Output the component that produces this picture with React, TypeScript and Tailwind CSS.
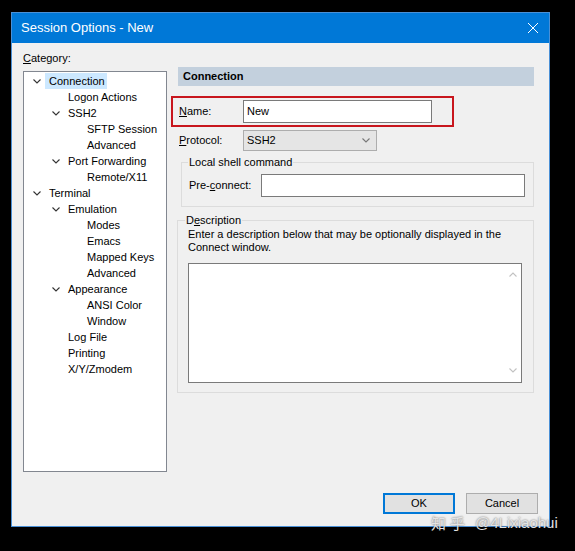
import React from "react";

const FONT = { fontFamily: '"Liberation Sans", Arial, sans-serif' };

type Item = { label: string; level: number; expanded?: boolean; selected?: boolean };

const items: Item[] = [
  { label: "Connection", level: 0, expanded: true, selected: true },
  { label: "Logon Actions", level: 1 },
  { label: "SSH2", level: 1, expanded: true },
  { label: "SFTP Session", level: 2 },
  { label: "Advanced", level: 2 },
  { label: "Port Forwarding", level: 1, expanded: true },
  { label: "Remote/X11", level: 2 },
  { label: "Terminal", level: 0, expanded: true },
  { label: "Emulation", level: 1, expanded: true },
  { label: "Modes", level: 2 },
  { label: "Emacs", level: 2 },
  { label: "Mapped Keys", level: 2 },
  { label: "Advanced", level: 2 },
  { label: "Appearance", level: 1, expanded: true },
  { label: "ANSI Color", level: 2 },
  { label: "Window", level: 2 },
  { label: "Log File", level: 1 },
  { label: "Printing", level: 1 },
  { label: "X/Y/Zmodem", level: 1 },
];

const Chevron = ({ color = "#333", w = 8, h = 5 }: { color?: string; w?: number; h?: number }) => (
  <svg width={w} height={h} viewBox="0 0 8 5">
    <path d="M0.5 0.5 L4 4 L7.5 0.5" fill="none" stroke={color} strokeWidth="1.1" />
  </svg>
);

const ChevronUp = ({ color = "#c2c2c2" }: { color?: string }) => (
  <svg width={8} height={5} viewBox="0 0 8 5">
    <path d="M0.5 4.5 L4 1 L7.5 4.5" fill="none" stroke={color} strokeWidth="1.1" />
  </svg>
);

const indents = ["ml-[5px]", "ml-[24px]", "ml-[43px]"];

export default function App() {
  return (
    <div className="relative w-[575px] h-[551px] bg-black pt-[12px] pl-[11px] text-[11px] leading-[13px] text-black" style={FONT}>
      <div className="w-[539px] h-[515px] border border-[#4a90d6] bg-[#f0f0f0] flex flex-col">
        {/* Title bar */}
        <div className="h-[30px] bg-[#0078d7] flex items-center justify-between pl-[9px] pr-[10px] text-white text-[13px] leading-[16px]">
          <span>Session Options - New</span>
          <svg width="12" height="12" viewBox="0 0 12 12">
            <path d="M1 1 L11 11 M11 1 L1 11" stroke="white" strokeWidth="1" />
          </svg>
        </div>

        <div className="flex">
          {/* Left column */}
          <div className="pl-[11px] pt-[9px] flex flex-col">
            <div className="h-[13px]">
              <span className="underline">C</span>ategory:
            </div>
            <div className="mt-[6px] w-[144px] h-[401px] border border-[#828790] bg-white pt-[1px] flex flex-col">
              {items.map((it, i) => (
                <div key={i} className={`h-[16px] flex items-center ${indents[it.level]}`}>
                  <div className="w-[16px] h-[16px] flex items-center justify-center">
                    {it.expanded ? <Chevron /> : null}
                  </div>
                  <div className={`h-[16px] flex items-center pl-[4px] pr-[2px] ${it.selected ? "bg-[#cce8ff]" : ""}`}>
                    {it.label}
                  </div>
                </div>
              ))}
            </div>
          </div>

          {/* Right column */}
          <div className="ml-[4px] pt-[24px] flex flex-col w-[363px]">
            <div className="ml-[7px] w-[356px] h-[19px] bg-[#c3d0dd] flex items-center pl-[5px] font-bold">
              Connection
            </div>

            <div className="mt-[10px] w-[283px] h-[31px] border-2 border-[#c8161d] flex items-center pl-[6px]">
              <div className="w-[64px]">
                <span className="underline">N</span>ame:
              </div>
              <div className="w-[189px] h-[23px] border border-[#7a7a7a] bg-white flex items-center pl-[3px]">New</div>
            </div>

            <div className="mt-[3px] h-[21px] flex items-center pl-[8px]">
              <div className="w-[64px]">
                <span className="underline">P</span>rotocol:
              </div>
              <div className="w-[134px] h-[21px] border border-[#adadad] bg-[#e5e5e5] flex items-center justify-between pl-[3px] pr-[6px]">
                <span>SSH2</span>
                <Chevron color="#777" />
              </div>
            </div>

            <fieldset className="mt-[5px] ml-[10px] w-[353px] border border-[#dcdcdc] p-0">
              <legend className="ml-[6px] px-[1px] leading-[13px]">Local shell command</legend>
              <div className="mt-[5px] flex items-center pl-[7px] pb-[9px]">
                <div className="w-[72px]">
                  Pre-<span className="underline">c</span>onnect:
                </div>
                <div className="w-[264px] h-[23px] border border-[#7a7a7a] bg-white" />
              </div>
            </fieldset>

            <fieldset className="mt-[7px] ml-[6px] w-[357px] border border-[#dcdcdc] p-0">
              <legend className="ml-[7px] px-[1px] leading-[13px]">
                D<span className="underline">e</span>scription
              </legend>
              <div className="pl-[10px] pb-[9px]">
                <div className="mt-[1px] leading-[13px]">
                  Enter a description below that may be optionally displayed in the
                  <br />
                  Connect window.
                </div>
                <div className="mt-[9px] w-[334px] h-[120px] border border-[#7a7a7a] bg-white flex justify-end">
                  <div className="w-[17px] flex flex-col items-center justify-between pt-[8px] pb-[9px]">
                    <ChevronUp />
                    <Chevron color="#c2c2c2" />
                  </div>
                </div>
              </div>
            </fieldset>
          </div>
        </div>

        {/* Buttons */}
        <div className="mt-[21px] flex justify-end gap-[11px] pr-[11px]">
          <button className="w-[72px] h-[21px] border-2 border-[#0078d7] bg-[#e1e1e1] flex items-center justify-center">
            OK
          </button>
          <button className="w-[72px] h-[21px] border border-[#adadad] bg-[#e1e1e1] flex items-center justify-center">
            Cancel
          </button>
        </div>
      </div>

      {/* Watermark */}
      <div
        className="absolute left-[431px] top-[513px] flex items-center text-[15px] leading-[20px] text-[#e4e4e4]"
        style={{ fontFamily: '"Noto Sans CJK SC", "Liberation Sans", sans-serif', textShadow: "0 0 2px rgba(0,0,0,0.6)" }}
      >
        <span className="tracking-[4px]">知乎</span>
        <span className="ml-[6px]" style={{ fontFamily: '"Liberation Sans", sans-serif' }}>@4Lixiaohui</span>
      </div>
    </div>
  );
}
